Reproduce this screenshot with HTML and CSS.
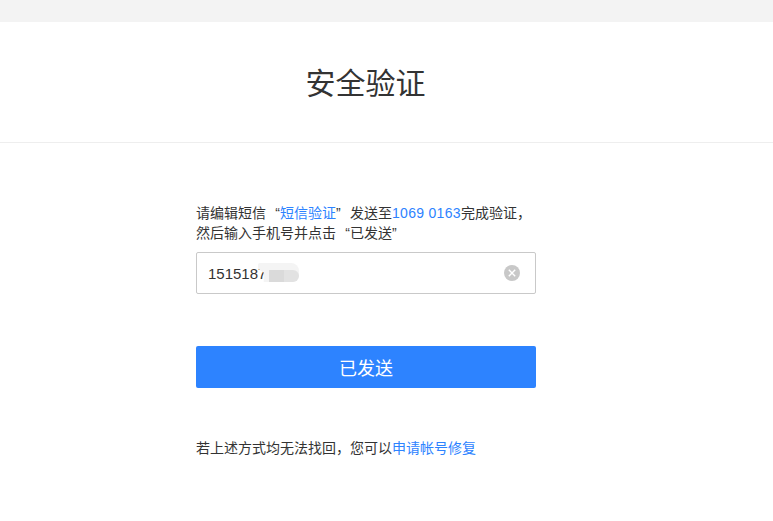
FILE: index.html
```html
<!DOCTYPE html>
<html lang="zh-CN">
<head>
    <meta charset="UTF-8">
    <meta name="viewport" content="width=device-width, initial-scale=1.0">
    <title>安全验证</title>
    <link rel="stylesheet" href="styles.css">
</head>
<body>
    <div class="top-bar"></div>
    <h1 class="page-title">安全验证</h1>
    <div class="verify-form">
        <p class="hint">请编辑短信<span class="quote-open">“</span><a href="#" class="link">短信验证</a><span class="quote-close">”</span>发送至<a href="#" class="link number">1069 0163</a>完成验证，<br>然后输入手机号并点击<span class="quote-open">“</span>已发送<span class="quote-close">”</span></p>
        <div class="phone-field">
            <span class="phone-value">1515187</span>
            <span class="phone-mask"><i class="mask-dark"></i><i class="mask-mid"></i></span>
            <svg class="clear-icon" width="16" height="16" viewBox="0 0 16 16">
                <circle cx="8" cy="8" r="8" fill="#c8c8c8"/>
                <path d="M4.8 4.8l6.4 6.4M11.2 4.8l-6.4 6.4" stroke="#fff" stroke-width="1.4" fill="none"/>
            </svg>
        </div>
        <button class="submit-btn">已发送</button>
        <p class="fallback">若上述方式均无法找回，您可以<a href="#" class="link">申请帐号修复</a></p>
    </div>
</body>
</html>
```

FILE: styles.css
```css
body {
    margin: 0;
    background-color: #fff;
    color: #333;
    font-family: "Liberation Sans", "Noto Sans CJK SC", sans-serif;
    font-size: 14px;
}

.top-bar {
    height: 22px;
    background-color: #f3f3f3;
}

.page-title {
    margin: 0;
    height: 120px;
    padding-right: 42px;
    line-height: 124px;
    border-bottom: 1px solid #eee;
    text-align: center;
    font-size: 30px;
    font-weight: normal;
}

.verify-form {
    width: 340px;
    margin-left: 196px;
    padding-top: 60px;
}

.hint {
    margin: 0;
    line-height: 20px;
}

.quote-open,
.quote-close {
    display: inline-block;
    width: 14px;
}

.quote-open {
    text-align: right;
}

.link {
    color: #2d83ff;
    text-decoration: none;
}

.number {
    letter-spacing: 0.3px;
}

.phone-field {
    position: relative;
    display: flex;
    align-items: center;
    height: 40px;
    margin-top: 9px;
    padding: 0 15px 0 11px;
    border: 1px solid #c9c9c9;
    border-radius: 2px;
}

.phone-value {
    font-size: 15px;
}

/* blurred part of the phone number, leaves only the foot of the 7 showing */
.phone-mask {
    position: absolute;
    left: 61px;
    top: 10px;
    width: 41px;
    height: 19px;
    border-radius: 2px 8px 8px 0;
    background-color: #f4f4f4;
    clip-path: polygon(0 0, 100% 0, 100% 100%, 14% 100%, 14% 50%, 0 30%);
    filter: blur(0.6px);
}

.mask-dark,
.mask-mid {
    position: absolute;
    top: 7px;
    height: 12px;
}

.mask-dark {
    left: 11px;
    width: 15px;
    background-color: #dadada;
}

.mask-mid {
    left: 26px;
    width: 15px;
    border-radius: 0 6px 6px 0;
    background-color: #e2e2e2;
}

.clear-icon {
    margin-left: auto;
}

.submit-btn {
    display: block;
    width: 100%;
    height: 42px;
    margin-top: 52px;
    padding: 0;
    border: none;
    border-radius: 2px;
    background-color: #2d83ff;
    color: #fff;
    font-family: inherit;
    font-size: 18px;
}

.fallback {
    margin: 50px 0 0;
    line-height: 20px;
}
```
